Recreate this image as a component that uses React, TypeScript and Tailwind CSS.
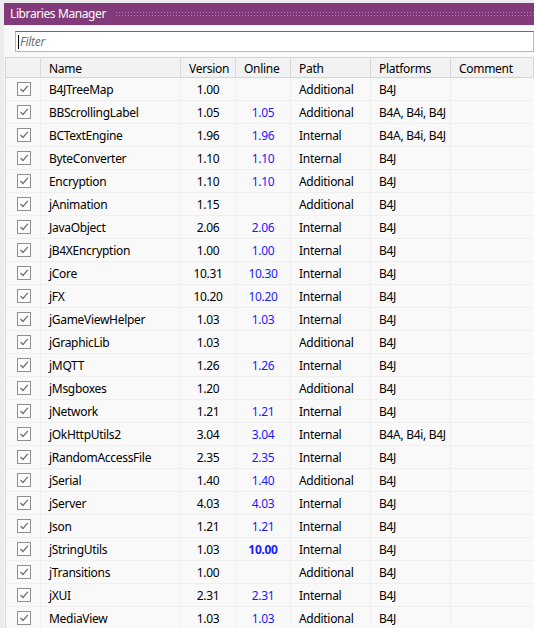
import React from "react";

type Lib = {
  name: string;
  version: string;
  online?: string;
  newer?: boolean;
  path: "Additional" | "Internal";
  platforms: string;
};

const ALL = "B4A, B4i, B4J";

const libs: Lib[] = [
  { name: "B4JTreeMap", version: "1.00", path: "Additional", platforms: "B4J" },
  { name: "BBScrollingLabel", version: "1.05", online: "1.05", path: "Additional", platforms: ALL },
  { name: "BCTextEngine", version: "1.96", online: "1.96", path: "Internal", platforms: ALL },
  { name: "ByteConverter", version: "1.10", online: "1.10", path: "Internal", platforms: "B4J" },
  { name: "Encryption", version: "1.10", online: "1.10", path: "Additional", platforms: "B4J" },
  { name: "jAnimation", version: "1.15", path: "Additional", platforms: "B4J" },
  { name: "JavaObject", version: "2.06", online: "2.06", path: "Internal", platforms: "B4J" },
  { name: "jB4XEncryption", version: "1.00", online: "1.00", path: "Internal", platforms: "B4J" },
  { name: "jCore", version: "10.31", online: "10.30", path: "Internal", platforms: "B4J" },
  { name: "jFX", version: "10.20", online: "10.20", path: "Internal", platforms: "B4J" },
  { name: "jGameViewHelper", version: "1.03", online: "1.03", path: "Internal", platforms: "B4J" },
  { name: "jGraphicLib", version: "1.03", path: "Additional", platforms: "B4J" },
  { name: "jMQTT", version: "1.26", online: "1.26", path: "Internal", platforms: "B4J" },
  { name: "jMsgboxes", version: "1.20", path: "Additional", platforms: "B4J" },
  { name: "jNetwork", version: "1.21", online: "1.21", path: "Internal", platforms: "B4J" },
  { name: "jOkHttpUtils2", version: "3.04", online: "3.04", path: "Internal", platforms: ALL },
  { name: "jRandomAccessFile", version: "2.35", online: "2.35", path: "Internal", platforms: "B4J" },
  { name: "jSerial", version: "1.40", online: "1.40", path: "Additional", platforms: "B4J" },
  { name: "jServer", version: "4.03", online: "4.03", path: "Internal", platforms: "B4J" },
  { name: "Json", version: "1.21", online: "1.21", path: "Internal", platforms: "B4J" },
  { name: "jStringUtils", version: "1.03", online: "10.00", newer: true, path: "Internal", platforms: "B4J" },
  { name: "jTransitions", version: "1.00", path: "Additional", platforms: "B4J" },
  { name: "jXUI", version: "2.31", online: "2.31", path: "Internal", platforms: "B4J" },
  { name: "MediaView", version: "1.03", online: "1.03", path: "Additional", platforms: "B4J" },
];

const cols = "grid grid-cols-[35px_140px_55px_55px_80px_80px_1fr]";

// Small grey windows-style checkbox, always ticked here
const Check = () => (
  <div className="w-[14px] h-[14px] border border-[#8f8f8f] bg-[#fdfdfd] flex items-center justify-center">
    <svg width="10" height="10" viewBox="0 0 10 10">
      <polyline points="1.5,5 4,7.5 8.8,1.8" fill="none" stroke="#707070" strokeWidth="1.3" />
    </svg>
  </div>
);

const HeaderCell = ({ label }: { label?: string }) => (
  <div className="border-r border-[#d9d9d9] px-[8px] pt-[2px] flex items-center">{label}</div>
);

export default function App() {
  return (
    <div
      className="w-[534px] h-[628px] overflow-hidden bg-[#ececec] pl-[4px] pt-[3px] text-[12px] tracking-[-0.3px] text-black"
      style={{ fontFamily: '"Noto Sans", "Open Sans", sans-serif' }}
    >
      {/* Title bar */}
      <div className="h-[22px] bg-[#833a7a] flex items-center pl-[6px]">
        <span className="text-white text-[12px] tracking-[-0.4px] whitespace-nowrap">Libraries Manager</span>
        <div className="flex-1 h-[6px] ml-[9px] bg-[radial-gradient(circle,#b57dac_0.7px,transparent_0.9px)] bg-[length:3px_3px]" />
      </div>

      <div className="bg-[#f9f9f9] h-full">
        {/* Filter */}
        <div className="pt-[6px] pl-[11px]">
          <div className="h-[21px] border border-[#8cc3ee] border-t-[#1a82d9] bg-white flex items-center pl-[2px] pt-[1px]">
            <span className="w-px h-[14px] bg-black" />
            <span className="italic text-[#6f6f6f] ml-[1px]">Filter</span>
          </div>
        </div>

        {/* Table */}
        <div className="mt-[5px] ml-[1px] border-l border-[#d4d4d4]">
          <div className={`${cols} h-[21px] bg-[#f2f2f2] border-t border-b border-[#d4d4d4]`}>
            <HeaderCell />
            <HeaderCell label="Name" />
            <HeaderCell label="Version" />
            <HeaderCell label="Online" />
            <HeaderCell label="Path" />
            <HeaderCell label="Platforms" />
            <HeaderCell label="Comment" />
          </div>

          {libs.map((lib) => (
            <div key={lib.name} className={`${cols} h-[23px] border-b border-[#f0f0f0]`}>
              <div className="border-r border-[#f0f0f0] flex items-center justify-center pl-[1px]">
                <Check />
              </div>
              <div className="border-r border-[#f0f0f0] px-[8px] pt-[2px] flex items-center whitespace-nowrap">{lib.name}</div>
              <div className="border-r border-[#f0f0f0] pt-[2px] flex items-center justify-center">{lib.version}</div>
              <div
                className={`border-r border-[#f0f0f0] pt-[2px] flex items-center justify-center text-[#1a1aff] ${
                  lib.newer ? "font-bold" : ""
                }`}
              >
                {lib.online}
              </div>
              <div className="border-r border-[#f0f0f0] px-[8px] pt-[2px] flex items-center">{lib.path}</div>
              <div className="border-r border-[#f0f0f0] px-[8px] pt-[2px] flex items-center whitespace-nowrap">{lib.platforms}</div>
              <div />
            </div>
          ))}
        </div>
      </div>
    </div>
  );
}
